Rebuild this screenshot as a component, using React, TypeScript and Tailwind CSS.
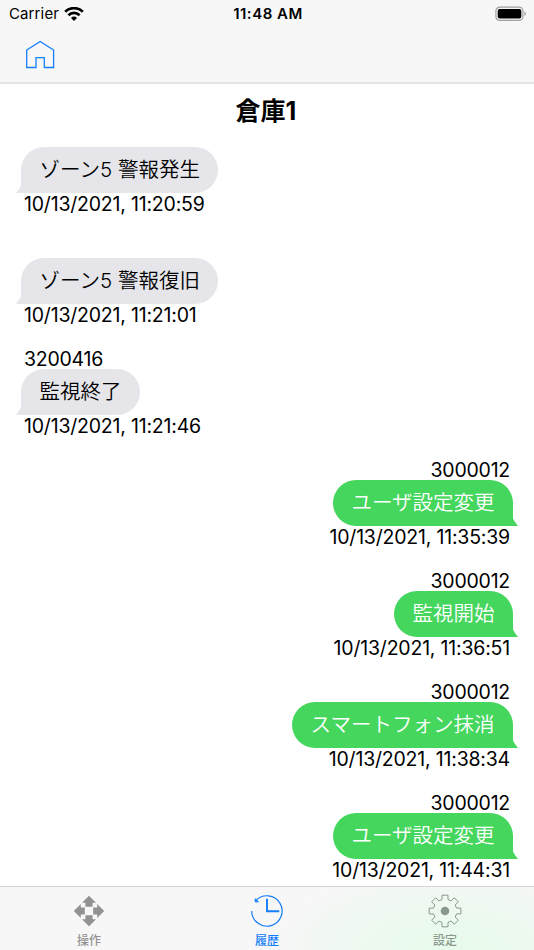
import { clsx } from 'clsx'

type Message = {
  id: number
  sender?: string
  text: string
  time: string
  outgoing?: boolean
}

const MESSAGES: Message[] = [
  { id: 1, text: 'ゾーン5 警報発生', time: '10/13/2021, 11:20:59' },
  { id: 2, text: 'ゾーン5 警報復旧', time: '10/13/2021, 11:21:01' },
  { id: 3, sender: '3200416', text: '監視終了', time: '10/13/2021, 11:21:46' },
  { id: 4, sender: '3000012', text: 'ユーザ設定変更', time: '10/13/2021, 11:35:39', outgoing: true },
  { id: 5, sender: '3000012', text: '監視開始', time: '10/13/2021, 11:36:51', outgoing: true },
  { id: 6, sender: '3000012', text: 'スマートフォン抹消', time: '10/13/2021, 11:38:34', outgoing: true },
  { id: 7, sender: '3000012', text: 'ユーザ設定変更', time: '10/13/2021, 11:44:31', outgoing: true },
]

const WifiIcon = () => (
  <svg viewBox="0 0 20 15" className="h-[15px] w-5" fill="none" stroke="black" strokeWidth="2.7">
    <path d="M1.2 4.8a12.4 12.4 0 0 1 17.6 0" />
    <path d="M4.4 8.2a7.9 7.9 0 0 1 11.2 0" />
    <path d="M10 13.9 7 10.9a4.3 4.3 0 0 1 6 0z" fill="black" stroke="none" />
  </svg>
)

const BatteryIcon = () => (
  <svg viewBox="0 0 32 16" className="h-4 w-8">
    <rect x="0.9" y="1.1" width="27" height="13.3" rx="3.8" fill="none" stroke="#a0a0a0" strokeWidth="1.2" />
    <rect x="2.7" y="2.9" width="23.6" height="9.7" rx="2" fill="black" />
    <path d="M29.4 5.6c2 .7 2 3.6 0 4.3z" fill="#a0a0a0" />
  </svg>
)

const HomeIcon = () => (
  <svg viewBox="0 0 30 30" className="h-[30px] w-[30px]" fill="none" stroke="#147efb" strokeWidth="1.3">
    <path d="M1.7 10 15.2 1.4 28.6 10v17.5h-9.3V17.7H11v9.8H1.7z" />
  </svg>
)

const MoveIcon = () => (
  <svg viewBox="0 0 34 34" className="h-[34px] w-[34px]" fill="currentColor">
    <path d="M17 1.8 24 8.8h-3.4v4h-7.2v-4H10zM17 32.2 24 25.2h-3.4v-4h-7.2v4H10zM1.8 17 8.8 10v3.4h4v7.2h-4V24zM32.2 17 25.2 10v3.4h-4v7.2h4V24z" />
  </svg>
)

const HistoryIcon = () => (
  <svg viewBox="0 0 34 34" className="h-[34px] w-[34px]" fill="none" stroke="currentColor">
    <path d="M1.7 17A15.2 15.2 0 1 0 5.8 6.6" strokeWidth="1.2" />
    <path d="M5.2 4.8v3h3.2z" fill="currentColor" strokeWidth="1" />
    <path d="M17 4.8v12.4h12.3" strokeWidth="1.9" />
  </svg>
)

const GearIcon = () => (
  <svg viewBox="0 0 34 34" className="h-[34px] w-[34px]" fill="none" stroke="currentColor">
    <path
      d="M14 1.2h6v4.4l3.1 1.3 3.2-3.1 4 4-3.1 3.2 1.3 3.1h4.4v5.8h-4.4l-1.3 3.1 3.1 3.2-4 4-3.2-3.1-3.1 1.3v4.4h-6v-4.4l-3.1-1.3-3.2 3.1-4-4L6.8 23l-1.3-3.1H1.2v-5.8h4.3L6.8 11 3.7 7.8l4-4 3.2 3.1L14 5.6z"
      strokeWidth="1"
    />
    <circle cx="17" cy="17" r="4.3" fill="currentColor" stroke="none" />
  </svg>
)

const TABS = [
  { label: '操作', icon: MoveIcon, color: 'text-[#929292]' },
  { label: '履歴', icon: HistoryIcon, color: 'text-[#147efb]' },
  { label: '設定', icon: GearIcon, color: 'text-[#8a978c]' },
]

const MessageRow = ({ message }: { message: Message }) => {
  const { sender, text, time, outgoing } = message

  return (
    <li className={clsx('flex h-[111px] flex-col px-6', outgoing ? 'items-end' : 'items-start')}>
      <p className="h-[22px] text-[19.5px] leading-6 tracking-[-0.23px]">{sender}</p>
      <div
        className={clsx(
          'relative flex h-[46px] items-center rounded-[23px] px-[18.5px] text-[20.5px] font-[350] whitespace-nowrap',
          outgoing
            ? '-mr-[3px] rounded-br-none bg-[#45d65d] text-white'
            : '-ml-[3px] rounded-bl-none bg-[#e5e5ea] text-black',
        )}
      >
        <span>{text}</span>
        <svg
          viewBox="0 0 5 8"
          className={clsx('absolute bottom-0 h-2 w-[5px]', outgoing ? '-right-[5px]' : '-left-[5px] -scale-x-100')}
          fill={outgoing ? '#45d65d' : '#e5e5ea'}
        >
          <path d="M0 0.5Q1.8 4.3 5 8H0z" />
        </svg>
      </div>
      <p className="h-[22px] text-[19.5px] leading-[22px] tracking-[-0.2px] whitespace-nowrap">{time}</p>
    </li>
  )
}

export default function App() {
  return (
    <div className="flex h-[950px] w-[534px] flex-col overflow-hidden bg-white font-[Inter,'Noto_Sans_CJK_JP',sans-serif] text-black">
      {/* Status + navigation bar */}
      <header className="h-[84px] shrink-0 border-b-2 border-[#e4e4e6] bg-[#f7f7f7]">
        <div className="grid h-7 grid-cols-3 items-center pr-[7px] pl-[9px]">
          <div className="flex items-center gap-[5px] text-[15px]">
            <span className="tracking-[0.12px]">Carrier</span>
            <WifiIcon />
          </div>
          <span className="text-center text-[15px] font-semibold tracking-[0.5px]">11:48 AM</span>
          <div className="flex justify-end">
            <BatteryIcon />
          </div>
        </div>
        <button className="mt-[11.5px] ml-[25px] block" aria-label="Home">
          <HomeIcon />
        </button>
      </header>

      <main className="min-h-0 flex-1 overflow-hidden">
        <h1 className="h-[41px] pt-[9px] pr-[2px] text-center text-[25px] leading-9 font-bold">倉庫1</h1>
        <ul>
          {MESSAGES.map((message) => (
            <MessageRow key={message.id} message={message} />
          ))}
        </ul>
      </main>

      {/* Tab bar */}
      <nav className="grid h-16 shrink-0 grid-cols-3 border-t border-[#d4d4d4] bg-[#f7f7f7] bg-[radial-gradient(ellipse_180px_85px_at_450px_64px,#e6fbeb,#eff8f1_60%,#f7f7f7)]">
        {TABS.map((tab) => (
          <button key={tab.label} className={clsx('flex flex-col items-center pt-[7px]', tab.color)}>
            <tab.icon />
            <span className="mt-1 text-[12px] leading-[17px] font-medium">{tab.label}</span>
          </button>
        ))}
      </nav>
    </div>
  )
}
